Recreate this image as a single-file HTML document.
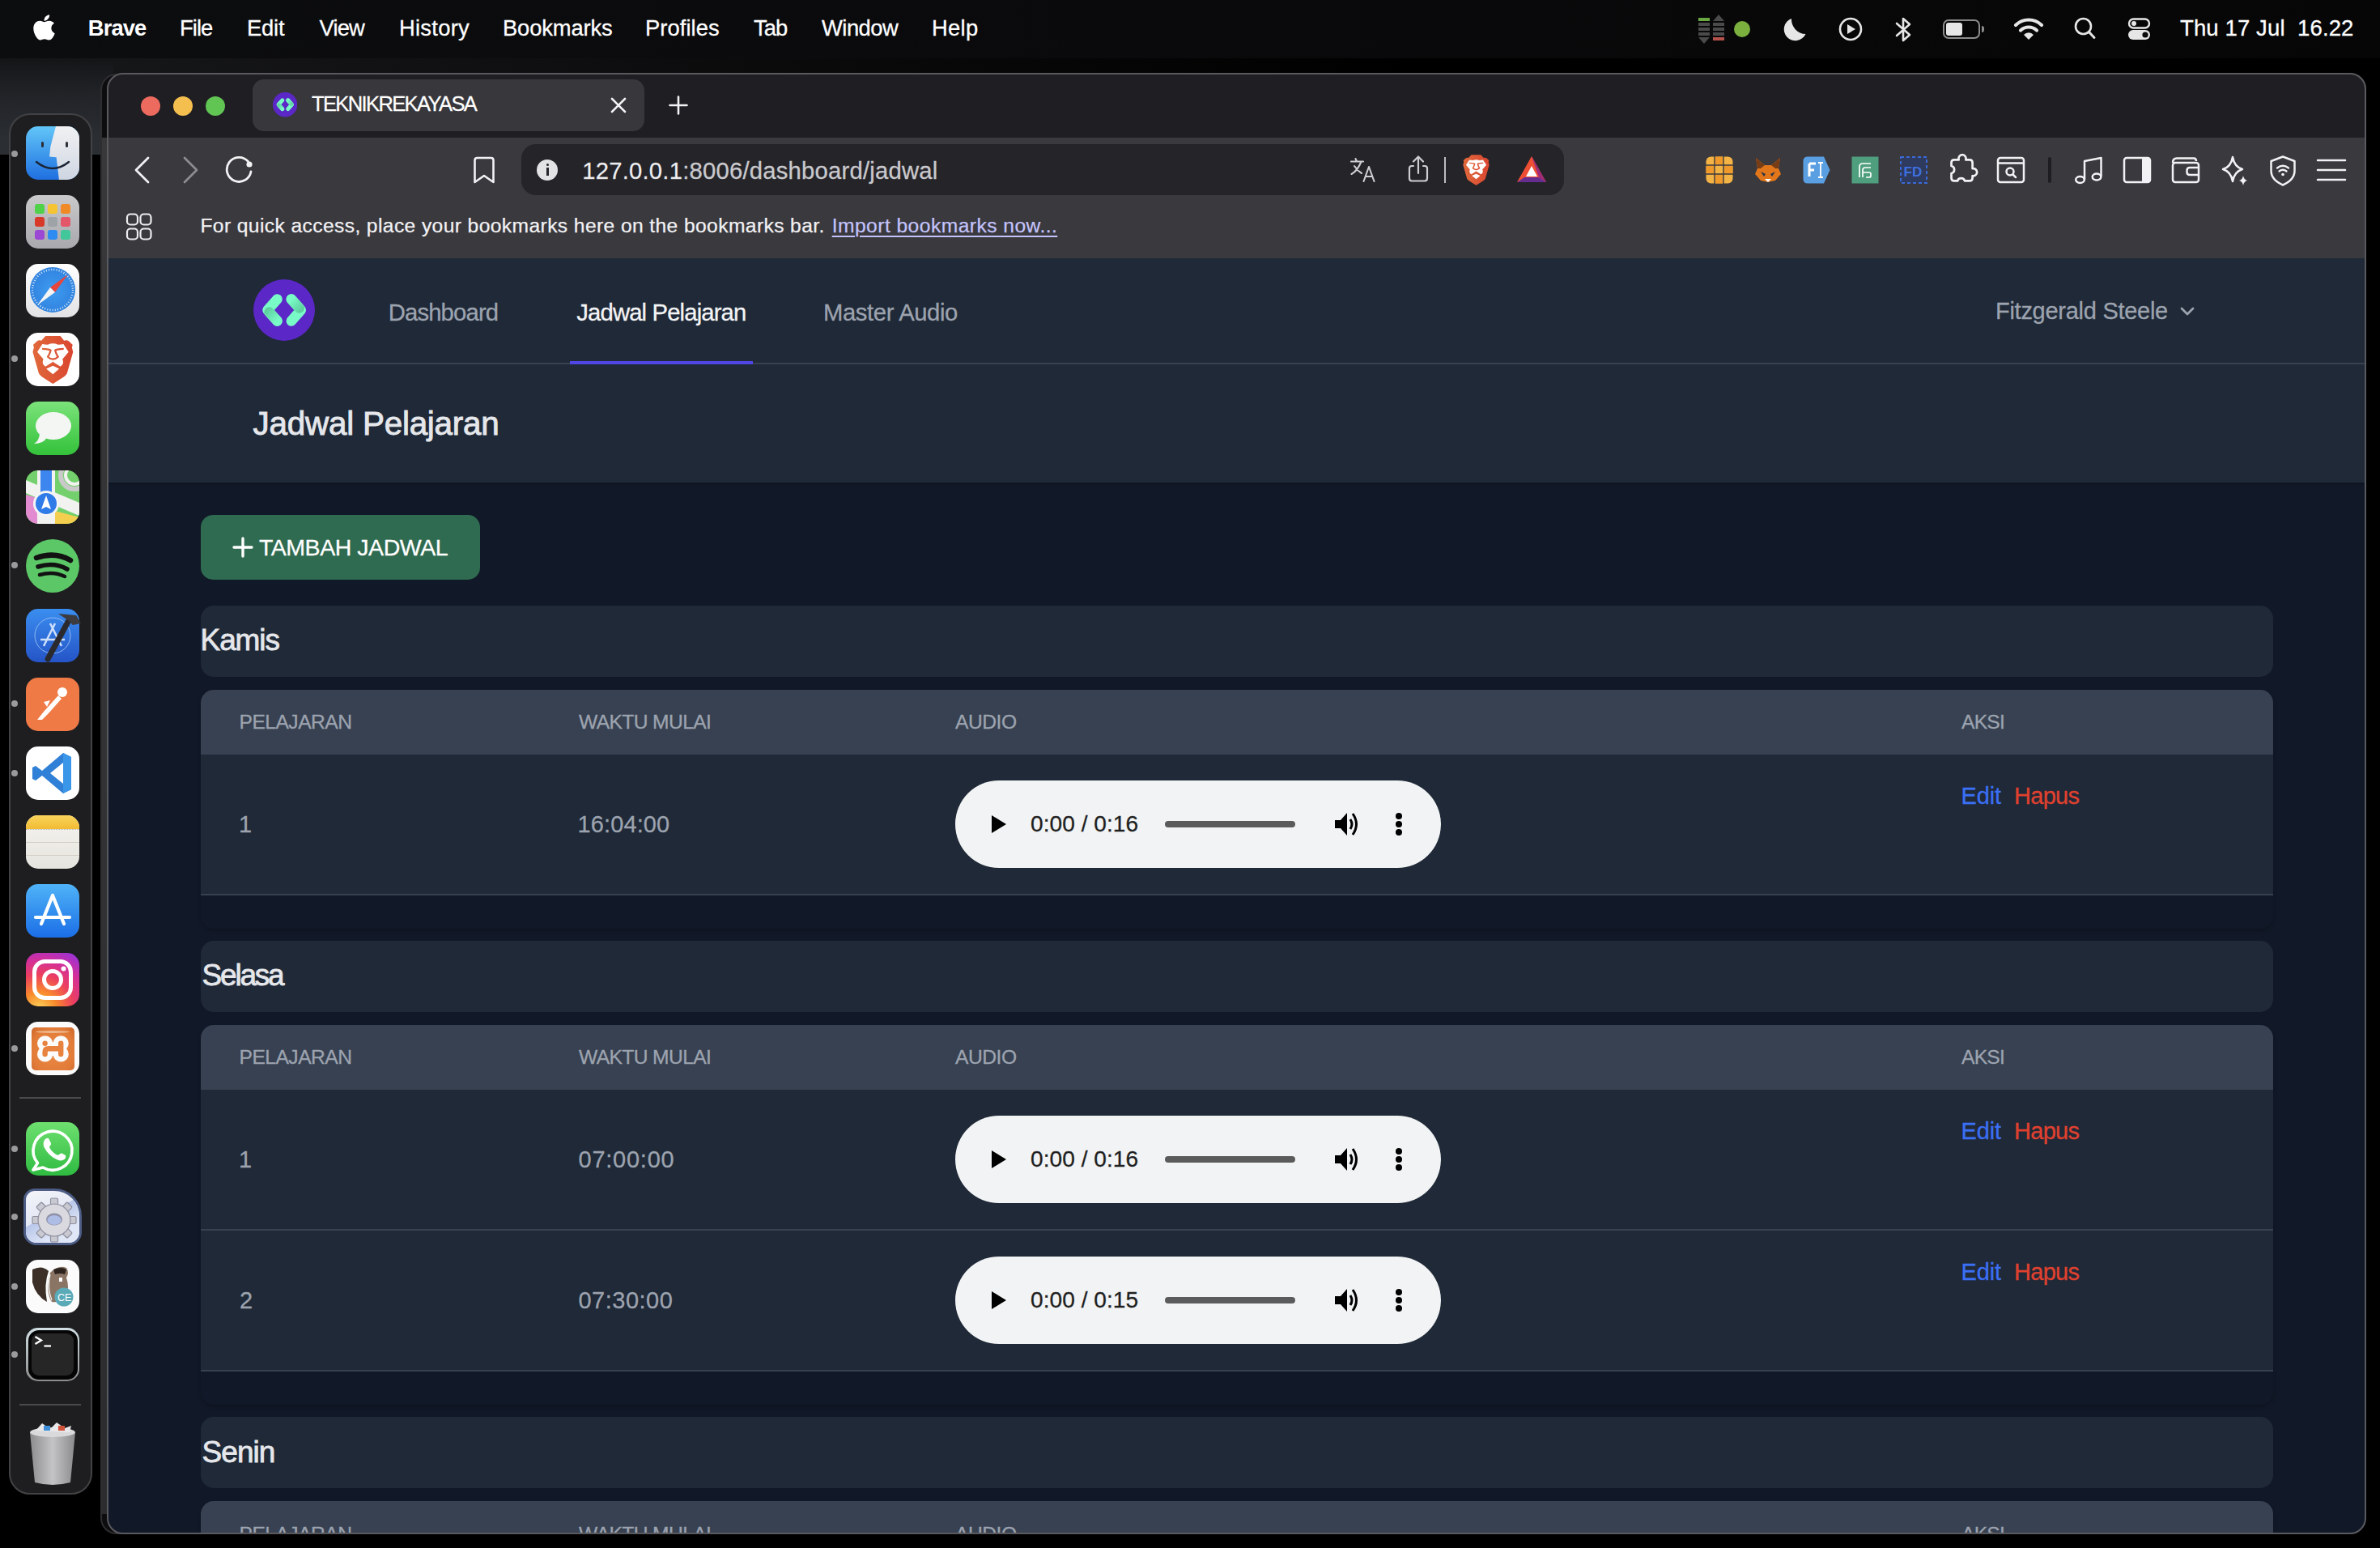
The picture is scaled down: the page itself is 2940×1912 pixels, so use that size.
<!DOCTYPE html>
<html><head><meta charset="utf-8">
<style>
*{box-sizing:border-box;margin:0;padding:0}
html,body{width:2940px;height:1912px;overflow:hidden;background:#000;font-family:"Liberation Sans",sans-serif}
.a{position:absolute}
.t{position:absolute;white-space:nowrap;line-height:1}
#win{position:absolute;left:0;top:0;width:2940px;height:1912px;clip-path:inset(90px 17px 17px 132px round 20px)}
</style></head>
<body>
<div class="a" style="left:0;top:72px;width:140px;height:119px;background:linear-gradient(180deg,#141517 0px,#202226 40px,#2b2e33 100px,#2b2e33 118px)"></div>
<div class="a" style="left:140px;top:72px;width:2800px;height:20px;background:linear-gradient(90deg,#151618 0px,#0b0b0c 800px,#000 1600px)"></div>
<div class="a" style="left:0;top:0;width:2940px;height:72px;background:linear-gradient(90deg,#0c0d0f 0px,#0a0a0c 1400px,#060606 2940px)"></div>
<svg class="a" style="left:41px;top:18px" width="27" height="33" viewBox="0 0 384 470"><path fill="#fff" d="M318.7 268.7c-.2-36.7 16.4-64.4 50-84.8-18.8-26.9-47.2-41.7-84.7-44.6-35.5-2.8-74.3 20.7-88.5 20.7-15 0-49.4-19.7-76.4-19.7C63.3 141.2 4 184.8 4 273.5q0 39.3 14.4 81.2c12.8 36.7 59 126.7 107.2 125.2 25.2-.6 43-17.9 75.8-17.9 31.8 0 48.3 17.9 76.4 17.9 48.6-.7 90.4-82.5 102.6-119.3-65.2-30.7-61.7-90-61.7-91.9zm-56.6-164.2c27.3-32.4 24.8-61.9 24-72.5-24.1 1.4-52 16.4-67.9 34.9-17.5 19.8-27.8 44.3-25.6 71.9 26.1 2 49.9-11.4 69.5-34.3z" transform="translate(0,-30)"/></svg>
<svg class="a" style="left:2096px;top:17px" width="36" height="38" viewBox="0 0 36 38">
 <rect x="2" y="5" width="14" height="4" fill="#6aa842"/>
 <rect x="2" y="11" width="14" height="4" fill="#4a4a4a"/><rect x="2" y="17" width="14" height="4" fill="#4a4a4a"/><rect x="2" y="23" width="14" height="4" fill="#4a4a4a"/>
 <polygon points="2,29 16,29 9,37" fill="#4a4a4a"/>
 <polygon points="20,9 34,9 27,1" fill="#4a4a4a"/>
 <rect x="20" y="11" width="14" height="4" fill="#4a4a4a"/><rect x="20" y="17" width="14" height="4" fill="#4a4a4a"/><rect x="20" y="23" width="14" height="4" fill="#4a4a4a"/>
 <rect x="20" y="29" width="14" height="4" fill="#b5514b"/>
</svg>
<div class="a" style="left:2142px;top:26px;width:20px;height:20px;border-radius:50%;background:#7bb03f"></div>
<svg class="a" style="left:2200px;top:20px" width="34" height="34" viewBox="0 0 34 34"><path d="M13 3 A14 14 0 1 0 30.5 22 A18 18 0 0 1 13 3 Z" fill="#e6e6e6"/></svg>
<svg class="a" style="left:2270px;top:20px" width="32" height="32" viewBox="0 0 32 32"><circle cx="16" cy="16" r="13" fill="none" stroke="#e6e6e6" stroke-width="2.6"/><polygon points="12,10 22,16 12,22" fill="#e6e6e6"/></svg>
<svg class="a" style="left:2340px;top:20px" width="24" height="34" viewBox="0 0 24 34"><polyline points="3,9 19,23 11,30 11,3 19,10 3,24" fill="none" stroke="#e6e6e6" stroke-width="2.6" stroke-linecap="round" stroke-linejoin="round"/></svg>
<div class="a" style="left:2400px;top:24px;width:46px;height:24px;border-radius:7px;border:2.5px solid #8c8c8c"></div>
<div class="a" style="left:2404px;top:28px;width:20px;height:16px;border-radius:3px;background:#e6e6e6"></div>
<div class="a" style="left:2448px;top:32px;width:3px;height:8px;border-radius:0 3px 3px 0;background:#8c8c8c"></div>
<svg class="a" style="left:2487px;top:21px" width="38" height="29" viewBox="0 0 38 29">
 <path d="M3 10 A23 23 0 0 1 35 10" fill="none" stroke="#e6e6e6" stroke-width="4.2" stroke-linecap="round"/>
 <path d="M9 16.5 A14.5 14.5 0 0 1 29 16.5" fill="none" stroke="#e6e6e6" stroke-width="4.2" stroke-linecap="round"/>
 <path d="M13 22 L19 28 L25 22 A8 8 0 0 0 13 22 Z" fill="#e6e6e6"/>
</svg>
<svg class="a" style="left:2560px;top:20px" width="32" height="32" viewBox="0 0 32 32"><circle cx="13.5" cy="12.5" r="9.5" fill="none" stroke="#e6e6e6" stroke-width="2.6"/><line x1="20.5" y1="19.5" x2="27" y2="26.5" stroke="#e6e6e6" stroke-width="3" stroke-linecap="round"/></svg>
<svg class="a" style="left:2627px;top:21px" width="32" height="30" viewBox="0 0 32 30">
 <rect x="3" y="2.5" width="25" height="11" rx="5.5" fill="none" stroke="#e6e6e6" stroke-width="2.4"/><circle cx="9" cy="8" r="3" fill="#e6e6e6"/>
 <rect x="2" y="16" width="27" height="12" rx="6" fill="#e6e6e6"/><circle cx="23" cy="22" r="3.6" fill="#0b0b0d"/>
</svg>

<div class="t" style="left:108.80px;top:20.81px;font-size:27.39px;font-weight:700;color:#fff;letter-spacing:-0.918px;">Brave</div>
<div class="t" style="left:222.00px;top:20.81px;font-size:27.39px;font-weight:400;color:#fff;letter-spacing:-0.962px;-webkit-text-stroke:0.27px #fff;">File</div>
<div class="t" style="left:305.00px;top:20.81px;font-size:27.39px;font-weight:400;color:#fff;letter-spacing:-0.188px;-webkit-text-stroke:0.27px #fff;">Edit</div>
<div class="t" style="left:394.50px;top:20.81px;font-size:27.39px;font-weight:400;color:#fff;letter-spacing:-0.857px;-webkit-text-stroke:0.27px #fff;">View</div>
<div class="t" style="left:493.00px;top:20.81px;font-size:27.39px;font-weight:400;color:#fff;letter-spacing:0.252px;-webkit-text-stroke:0.27px #fff;">History</div>
<div class="t" style="left:621.00px;top:20.81px;font-size:27.39px;font-weight:400;color:#fff;letter-spacing:-0.153px;-webkit-text-stroke:0.27px #fff;">Bookmarks</div>
<div class="t" style="left:797.00px;top:20.81px;font-size:27.39px;font-weight:400;color:#fff;letter-spacing:0.058px;-webkit-text-stroke:0.27px #fff;">Profiles</div>
<div class="t" style="left:931.00px;top:20.81px;font-size:27.39px;font-weight:400;color:#fff;letter-spacing:-0.955px;-webkit-text-stroke:0.27px #fff;">Tab</div>
<div class="t" style="left:1015.00px;top:20.81px;font-size:27.39px;font-weight:400;color:#fff;letter-spacing:-0.519px;-webkit-text-stroke:0.27px #fff;">Window</div>
<div class="t" style="left:1151.00px;top:20.81px;font-size:27.39px;font-weight:400;color:#fff;letter-spacing:0.308px;-webkit-text-stroke:0.27px #fff;">Help</div>
<div class="t" style="left:2693.00px;top:20.89px;font-size:27.54px;font-weight:400;color:#fff;letter-spacing:0.105px;-webkit-text-stroke:0.28px #fff;">Thu 17 Jul&nbsp;&nbsp;16.22</div>
<div class="a" style="left:11px;top:140px;width:103px;height:1706px;border-radius:26px;background:#1e1e20;border:2px solid #424245"></div>
<div class="a" style="left:32px;top:156px;width:66px;height:66px"><div style="position:absolute;left:0;top:0;width:66px;height:66px;border-radius:15px;overflow:hidden;background:linear-gradient(180deg,#62c6f8,#1f6fe0)"><div style="position:absolute;left:0;top:0;width:66px;height:66px;background:linear-gradient(180deg,#f1f1f3,#cfd6e2);clip-path:polygon(56% 0,100% 0,100% 100%,62% 100%,57% 58%,44% 57%,46% 38%)"></div><svg style="position:absolute;left:0;top:0" width="66" height="66"><rect x="19" y="19" width="3" height="7" rx="1.5" fill="#2a2f38"/><rect x="49" y="19" width="3" height="7" rx="1.5" fill="#2a2f38"/><path d="M13 44 Q33 60 53 44" fill="none" stroke="#1b2434" stroke-width="2.4" stroke-linecap="round"/></svg></div></div>
<div class="a" style="left:32px;top:241px;width:66px;height:66px"><div style="position:absolute;left:0;top:0;width:66px;height:66px;border-radius:15px;background:linear-gradient(180deg,#c9c9cc,#a9a9ad)"><svg style="position:absolute;left:0;top:0" width="66" height="66"><rect x="11" y="11" width="12" height="12" rx="3" fill="#4fd14a"/><rect x="27" y="11" width="12" height="12" rx="3" fill="#f6c433"/><rect x="43" y="11" width="12" height="12" rx="3" fill="#f08a26"/><rect x="11" y="27" width="12" height="12" rx="3" fill="#d83a2a"/><rect x="27" y="27" width="12" height="12" rx="3" fill="#9ea3a8"/><rect x="43" y="27" width="12" height="12" rx="3" fill="#e4566a"/><rect x="11" y="43" width="12" height="12" rx="3" fill="#9b48d4"/><rect x="27" y="43" width="12" height="12" rx="3" fill="#2e8bf2"/><rect x="43" y="43" width="12" height="12" rx="3" fill="#41c79a"/></svg></div></div>
<div class="a" style="left:32px;top:326px;width:66px;height:66px"><div style="position:absolute;left:0;top:0;width:66px;height:66px;border-radius:15px;background:linear-gradient(180deg,#fff,#e2e2e4)"><div style="position:absolute;left:5px;top:4px;width:56px;height:56px;border-radius:50%;background:radial-gradient(circle,#3f9cf0,#2a78d8)"></div><svg style="position:absolute;left:0;top:0" width="66" height="66"><circle cx="33" cy="32" r="25" fill="none" stroke="#d6e8fb" stroke-width="2.5" stroke-dasharray="1 2.2"/><polygon points="52,13 36,35 30,29" fill="#e8453c"/><polygon points="14,51 30,29 36,35" fill="#f4f4f4"/></svg></div></div>
<div class="a" style="left:32px;top:411px;width:66px;height:66px"><div style="position:absolute;left:0;top:0;width:66px;height:66px;border-radius:15px;background:#fff"><svg style="position:absolute;left:0;top:0" width="66" height="66" viewBox="85 100 1355 1365"><defs><linearGradient id="LGd" x1="0" x2="1"><stop offset="0" stop-color="#e0693b"/><stop offset="1" stop-color="#da4630"/></linearGradient></defs><path d="M580 185 L960 185 L1055 300 Q1130 280 1185 320 L1275 410 L1255 470 L1285 590 L1130 1140 Q1100 1190 1040 1230 L790 1395 Q770 1405 750 1395 L500 1230 Q440 1190 410 1140 L255 590 L285 470 L265 410 L355 320 Q410 280 475 300 Z" fill="url(#LGd)"/><path d="M500 390 Q560 400 640 405 Q720 370 770 375 Q820 370 900 405 Q980 400 1040 390 L1170 590 L1015 770 Q1040 830 1030 880 Q1000 950 960 965 L780 850 L770 830 L760 850 L580 965 Q540 950 510 880 Q500 830 525 770 L370 590 Z" fill="#fff"/><path d="M495 512 Q640 515 712 548 Q690 640 640 715 Q700 775 770 775 Q840 775 900 715 Q850 640 828 548 Q900 515 1045 512" fill="none" stroke="url(#LGd)" stroke-width="48" stroke-linejoin="round"/><path d="M770 770 L770 855" stroke="url(#LGd)" stroke-width="40"/><path d="M600 1020 L770 945 L930 1020 L770 1160 Z" fill="#fff"/></svg></div></div>
<div class="a" style="left:32px;top:496px;width:66px;height:66px"><div style="position:absolute;left:0;top:0;width:66px;height:66px;border-radius:15px;background:linear-gradient(180deg,#7be37a,#33c23a)"><svg style="position:absolute;left:0;top:0" width="66" height="66"><ellipse cx="34" cy="30" rx="22" ry="17" fill="#f3f6f3"/><path d="M17 40 Q16 49 10 52 Q22 52 26 44 Z" fill="#f3f6f3"/></svg></div></div>
<div class="a" style="left:32px;top:581px;width:66px;height:66px"><div style="position:absolute;left:0;top:0;width:66px;height:66px;border-radius:15px;overflow:hidden;background:#74d06c"><svg style="position:absolute;left:0;top:0" width="66" height="66"><polygon points="0,30 14,34 14,66 0,66" fill="#e28bd0"/><polygon points="36,50 66,58 66,66 36,66" fill="#f4cf4f"/><polygon points="0,12 66,40 66,56 0,28" fill="#f2f2f0"/><rect x="14" y="0" width="22" height="66" fill="#f2f2f0"/><rect x="18" y="0" width="14" height="36" fill="#3d86f0"/><circle cx="60" cy="6" r="17" fill="none" stroke="#c9c9c9" stroke-width="6"/><circle cx="60" cy="6" r="11" fill="none" stroke="#f2f2f0" stroke-width="4"/><circle cx="25" cy="41" r="16" fill="#f4f4f4"/><circle cx="25" cy="41" r="13" fill="#2f7be8"/><polygon points="25,31 31,48 25,45 19,48" fill="#fff"/></svg></div></div>
<div class="a" style="left:32px;top:666px;width:66px;height:66px"><div style="position:absolute;left:0;top:0;width:66px;height:66px;border-radius:50%;background:#5cc767"><svg style="position:absolute;left:0;top:0" width="66" height="66"><path d="M13 23 Q36 15 55 26" fill="none" stroke="#121212" stroke-width="6.5" stroke-linecap="round"/><path d="M15 34 Q35 28 51 37" fill="none" stroke="#121212" stroke-width="5.5" stroke-linecap="round"/><path d="M17 44 Q34 39 48 46" fill="none" stroke="#121212" stroke-width="4.5" stroke-linecap="round"/></svg></div></div>
<div class="a" style="left:32px;top:752px;width:66px;height:66px"><div style="position:absolute;left:0;top:0;width:66px;height:66px;border-radius:15px;background:linear-gradient(180deg,#3a8ef0,#2554c7)"><svg style="position:absolute;left:0;top:-4px" width="72" height="74"><circle cx="33" cy="37" r="22" fill="none" stroke="#8fbaf5" stroke-width="1"/><path d="M22 50 L36 22 M44 50 L30 22 M18 42 L48 42" stroke="#cfe0fb" stroke-width="2.5" fill="none"/><path d="M27 66 L52 20" stroke="#2a2a2e" stroke-width="7" stroke-linecap="round"/><path d="M40 10 L62 12 L68 22 L58 24 L52 18 Z" fill="#3b3b40"/></svg></div></div>
<div class="a" style="left:32px;top:837px;width:66px;height:66px"><div style="position:absolute;left:0;top:0;width:66px;height:66px;border-radius:15px;background:#ef7a45"><svg style="position:absolute;left:0;top:0" width="66" height="66"><circle cx="45" cy="18" r="6" fill="#fff"/><path d="M40 22 L22 42 L14 52 L20 52 L28 44 L44 26 Z" fill="#fff"/><path d="M22 30 L30 28 L26 36 Z" fill="#fff"/></svg></div></div>
<div class="a" style="left:32px;top:922px;width:66px;height:66px"><div style="position:absolute;left:0;top:0;width:66px;height:66px;border-radius:15px;background:#fff"><svg style="position:absolute;left:0;top:0" width="66" height="66"><path d="M46 8 L56 13 L56 53 L46 58 L20 36 L12 42 L8 40 L8 26 L12 24 L20 30 Z M46 20 L30 33 L46 46 Z" fill="#2f80d6"/><path d="M46 8 L56 13 L56 53 L46 58 Z" fill="#3a96e8"/></svg></div></div>
<div class="a" style="left:32px;top:1007px;width:66px;height:66px"><div style="position:absolute;left:0;top:0;width:66px;height:66px;border-radius:15px;overflow:hidden;background:linear-gradient(180deg,#f4f3ef,#e6e4de)"><div style="position:absolute;left:0;top:0;width:66px;height:17px;background:linear-gradient(180deg,#f9d45c,#f2bb33)"></div><div style="position:absolute;left:0;top:17px;width:66px;height:1px;border-top:1px dotted #b9b5ac"></div><div style="position:absolute;left:0;top:33px;width:66px;height:1px;background:#d3cfc6"></div><div style="position:absolute;left:0;top:49px;width:66px;height:1px;background:#d3cfc6"></div></div></div>
<div class="a" style="left:32px;top:1092px;width:66px;height:66px"><div style="position:absolute;left:0;top:0;width:66px;height:66px;border-radius:15px;background:linear-gradient(180deg,#4fb3f8,#1b6ee6)"><svg style="position:absolute;left:0;top:0" width="66" height="66"><path d="M33 14 L19 49 M33 14 L47 49 M12 41 L54 41" stroke="#fff" stroke-width="4.2" stroke-linecap="round" fill="none"/></svg></div></div>
<div class="a" style="left:32px;top:1177px;width:66px;height:66px"><div style="position:absolute;left:0;top:0;width:66px;height:66px;border-radius:15px;background:radial-gradient(circle at 25% 105%,#fcd55a 0%,#f98a2c 25%,#ec3f5f 50%,#d22f9c 72%,#8a34e8 100%)"><svg style="position:absolute;left:0;top:0" width="66" height="66"><rect x="10.5" y="10.5" width="45" height="45" rx="13" fill="none" stroke="#fff" stroke-width="5"/><circle cx="33" cy="33" r="10.5" fill="none" stroke="#fff" stroke-width="5"/><circle cx="46.5" cy="19.5" r="3" fill="#fff"/></svg></div></div>
<div class="a" style="left:32px;top:1262px;width:66px;height:66px"><div style="position:absolute;left:0;top:0;width:66px;height:66px;border-radius:15px;background:#fbfbfb"><div style="position:absolute;left:6.5px;top:6.5px;width:53px;height:53px;border-radius:5px;background:radial-gradient(ellipse at 50% 55%,#eb8a45 0%,#e27b38 70%,#c9662a 100%)"></div><div style="position:absolute;left:12px;top:10.5px;width:42px;height:3px;border-radius:50%;background:#edb88f"></div><svg style="position:absolute;left:0;top:0" width="66" height="66"><g fill="#fbfbfb"><circle cx="23.6" cy="26.8" r="9.6"/><circle cx="43.2" cy="26.8" r="9.6"/><circle cx="23.6" cy="40" r="9.6"/><circle cx="43.2" cy="40" r="9.6"/><rect x="22" y="25" width="23" height="17"/></g><circle cx="23.6" cy="26.8" r="3.2" fill="#e8823f"/><path d="M43.2 26.8 V40 M43.2 33.3 H28 Q23.6 33.3 23.6 37.5 V40" fill="none" stroke="#e8823f" stroke-width="6.4" stroke-linecap="round"/></svg></div></div>
<div class="a" style="left:24px;top:1355px;width:76px;height:2px;background:#4a4a4d"></div>
<div class="a" style="left:32px;top:1386px;width:66px;height:66px"><div style="position:absolute;left:0;top:0;width:66px;height:66px;border-radius:15px;background:linear-gradient(180deg,#6ee06f,#2fbb41)"><svg style="position:absolute;left:0;top:0" width="66" height="66"><path d="M14.5 50.5 A24 24 0 1 1 21 56 L9 59 Z" fill="none" stroke="#fff" stroke-width="3.6" stroke-linejoin="round"/><path d="M23 22 Q25 19 28 20 L31 26 Q31.5 28 29.5 29.5 Q28.5 30.5 29.5 32 Q33 38 38.5 40.5 Q40 41 41 40 Q42.5 38 44.5 38.5 L49 41 Q50 44 47.5 46 Q44 48.5 39 46.5 Q28 42 22.5 31 Q20.5 26 23 22 Z" fill="#fff"/></svg></div></div>
<div class="a" style="left:32px;top:1470px;width:66px;height:66px"><div style="position:absolute;left:-3px;top:-2px;width:72px;height:70px;border-radius:14px 34px 16px 16px;background:linear-gradient(160deg,#f4f5fa 0%,#dfe4f2 60%,#c9d2ea 100%);border:3px solid #4d5d85;overflow:hidden"><div style="position:absolute;left:0;top:0;width:70px;height:70px;background:linear-gradient(150deg,rgba(0,0,0,0) 40%,#b8c6ea 41%,#dfe6f6 70%)"></div><svg style="position:absolute;left:0;top:0" width="70" height="70" viewBox="0 0 70 70"><g transform="translate(35,36)"><g fill="#c9c9d1" stroke="#8f8fa0" stroke-width="1.2"><rect x="-4.5" y="-27" width="9" height="10" rx="1.5" transform="rotate(0)"/><rect x="-4.5" y="-27" width="9" height="10" rx="1.5" transform="rotate(45)"/><rect x="-4.5" y="-27" width="9" height="10" rx="1.5" transform="rotate(90)"/><rect x="-4.5" y="-27" width="9" height="10" rx="1.5" transform="rotate(135)"/><rect x="-4.5" y="-27" width="9" height="10" rx="1.5" transform="rotate(180)"/><rect x="-4.5" y="-27" width="9" height="10" rx="1.5" transform="rotate(225)"/><rect x="-4.5" y="-27" width="9" height="10" rx="1.5" transform="rotate(270)"/><rect x="-4.5" y="-27" width="9" height="10" rx="1.5" transform="rotate(315)"/><circle r="20"/></g><circle r="19" fill="#d9d9df"/><ellipse rx="10" ry="7.5" cx="0" cy="-1" fill="#8f90a8"/><ellipse rx="8.5" ry="6" cx="0" cy="0" fill="#aebde6"/></g></svg></div></div>
<div class="a" style="left:32px;top:1556px;width:66px;height:66px"><div style="position:absolute;left:0;top:0;width:66px;height:66px;border-radius:15px;background:#fbfbfb"><svg style="position:absolute;left:0;top:0" width="66" height="66"><path d="M8 12 Q20 6 28 14 Q22 30 26 52 Q12 44 8 28 Z" fill="#3b2f28"/><path d="M30 16 Q40 6 50 10 Q54 16 50 22 Q54 34 50 44 Q44 54 32 52 Q24 40 30 16 Z" fill="#8a7565"/><path d="M34 12 Q44 8 50 12 L48 18 Q42 16 36 18 Z" fill="#2d241f"/><rect x="41" y="22" width="4" height="5" fill="#fff"/><path d="M30 18 Q26 34 32 50" fill="none" stroke="#f4f4f4" stroke-width="1.2"/><circle cx="47" cy="46" r="11.5" fill="#5aaab8"/><text x="39" y="51" font-family="Liberation Sans" font-size="12.5" fill="#fff">CE</text></svg></div></div>
<div class="a" style="left:32px;top:1640px;width:66px;height:66px"><div style="position:absolute;left:0;top:0;width:66px;height:66px;border-radius:15px;background:linear-gradient(180deg,#d2e0e6,#8c8c8c);"><div style="position:absolute;left:2.5px;top:2.5px;width:61px;height:61px;border-radius:13px;background:#050505"></div><div style="position:absolute;left:7px;top:7px;width:52px;height:52px;border-radius:9px;background:#262626"></div><svg style="position:absolute;left:0;top:0" width="66" height="66"><path d="M11.5 11 L19 15.5 L11.5 20" fill="none" stroke="#fff" stroke-width="2.3"/><path d="M22.5 22.5 H31" stroke="#fff" stroke-width="2.3"/></svg></div></div>
<div class="a" style="left:24px;top:1734px;width:76px;height:2px;background:#4a4a4d"></div>
<svg class="a" style="left:34px;top:1755px" width="62" height="82" viewBox="0 0 62 82"><defs><linearGradient id="tg" x1="0" x2="1"><stop offset="0" stop-color="#8c8c8e"/><stop offset=".5" stop-color="#c4c4c6"/><stop offset="1" stop-color="#8a8a8c"/></linearGradient></defs><path d="M3 14 L59 14 L53 76 Q31 82 9 76 Z" fill="url(#tg)"/><ellipse cx="31" cy="14" rx="28" ry="6" fill="#d9d9db"/><path d="M10 12 L18 3 L28 10 L36 2 L46 9 L54 6 L52 14 Z" fill="#e8e8ea"/><rect x="20" y="6" width="8" height="6" fill="#3c8fd8"/><rect x="38" y="6" width="8" height="6" fill="#d0523a"/></svg>
<div class="a" style="left:14px;top:186px;width:8px;height:8px;border-radius:50%;background:#9a9a9c"></div>
<div class="a" style="left:14px;top:439px;width:8px;height:8px;border-radius:50%;background:#9a9a9c"></div>
<div class="a" style="left:14px;top:694px;width:8px;height:8px;border-radius:50%;background:#9a9a9c"></div>
<div class="a" style="left:14px;top:865px;width:8px;height:8px;border-radius:50%;background:#9a9a9c"></div>
<div class="a" style="left:14px;top:951px;width:8px;height:8px;border-radius:50%;background:#9a9a9c"></div>
<div class="a" style="left:14px;top:1291px;width:8px;height:8px;border-radius:50%;background:#9a9a9c"></div>
<div class="a" style="left:14px;top:1415px;width:8px;height:8px;border-radius:50%;background:#9a9a9c"></div>
<div class="a" style="left:14px;top:1499px;width:8px;height:8px;border-radius:50%;background:#9a9a9c"></div>
<div class="a" style="left:14px;top:1585px;width:8px;height:8px;border-radius:50%;background:#9a9a9c"></div>
<div class="a" style="left:14px;top:1669px;width:8px;height:8px;border-radius:50%;background:#9a9a9c"></div>
<div class="a" style="left:124px;top:91px;width:60px;height:1804px;border-radius:20px 0 0 20px;background:#0d0d0f;border:2px solid #2e2e31;border-right:none"></div>
<div class="a" style="left:126px;top:170px;width:6px;height:1700px;background:linear-gradient(180deg,#38383b,#2c2c2e)"></div>
<div id="win">

<div class="a" style="left:132px;top:90px;width:2791px;height:80px;background:#1f1e23"></div>
<div class="a" style="left:132px;top:170px;width:2791px;height:149px;background:#3a393e"></div>
<div class="a" style="left:174px;top:119px;width:24px;height:24px;border-radius:50%;background:#ec6a5e"></div>
<div class="a" style="left:214px;top:119px;width:24px;height:24px;border-radius:50%;background:#f4bf4f"></div>
<div class="a" style="left:254px;top:119px;width:24px;height:24px;border-radius:50%;background:#61c554"></div>
<div class="a" style="left:312px;top:98px;width:484px;height:64px;border-radius:14px;background:#38373c"></div>
<svg class="a" style="left:336.5px;top:114.39999999999999px" width="30.4" height="30.4" viewBox="0 0 76 76"><circle cx="38" cy="38" r="38" fill="#5b27c7"/><defs><linearGradient id="lgA351" gradientUnits="userSpaceOnUse" x1="17" y1="38" x2="30" y2="51"><stop offset="0" stop-color="#5fcfa0"/><stop offset="1" stop-color="#79fbc8"/></linearGradient><linearGradient id="lgB351" gradientUnits="userSpaceOnUse" x1="59.5" y1="38" x2="46.5" y2="25"><stop offset="0" stop-color="#5fcfa0"/><stop offset="1" stop-color="#79fbc8"/></linearGradient></defs><g fill="none" stroke-width="12.5" stroke-linecap="round" stroke-linejoin="round"><polyline points="29.5,24.5 17.5,38 29.5,51.5" stroke="#79fbc8"/><polyline points="46.8,51.5 58.8,38 46.8,24.5" stroke="#79fbc8"/><line x1="19.5" y1="40.5" x2="29.5" y2="51.5" stroke="url(#lgA351)"/><line x1="56.8" y1="35.5" x2="46.8" y2="24.5" stroke="url(#lgB351)"/></g></svg>
<svg class="a" style="left:754px;top:120px" width="20" height="20" viewBox="0 0 20 20"><path d="M2 2 L18 18 M18 2 L2 18" stroke="#f2f2f4" stroke-width="2.6" stroke-linecap="round"/></svg>
<svg class="a" style="left:826px;top:118px" width="24" height="24" viewBox="0 0 24 24"><path d="M12 1.5 V22.5 M1.5 12 H22.5" stroke="#f2f2f4" stroke-width="2.6" stroke-linecap="round"/></svg>
<svg class="a" style="left:160px;top:190px" width="32" height="40" viewBox="0 0 32 40"><polyline points="23,5 8,20 23,35" fill="none" stroke="#f2f2f4" stroke-width="2.8" stroke-linecap="round" stroke-linejoin="round"/></svg>
<svg class="a" style="left:220px;top:190px" width="32" height="40" viewBox="0 0 32 40"><polyline points="8,5 23,20 8,35" fill="none" stroke="#8d8c91" stroke-width="2.8" stroke-linecap="round" stroke-linejoin="round"/></svg>
<svg class="a" style="left:275px;top:186.5px" width="42" height="40" viewBox="0 0 42 40"><path d="M31.5 12.5 A15 15 0 1 0 35 25" fill="none" stroke="#f2f2f4" stroke-width="2.8" stroke-linecap="round"/><circle cx="33" cy="16" r="3.6" fill="#f2f2f4"/></svg>
<svg class="a" style="left:580px;top:190px" width="36" height="40" viewBox="0 0 36 40"><path d="M6.5 8 Q6.5 5 9.5 5 H26.5 Q29.5 5 29.5 8 V35 L18 27 L6.5 35 Z" fill="none" stroke="#f2f2f4" stroke-width="2.6" stroke-linejoin="round"/></svg>
<div class="a" style="left:644px;top:178px;width:1288px;height:63px;border-radius:18px;background:#252429"></div>
<div class="a" style="left:663px;top:197px;width:26px;height:26px;border-radius:50%;background:#e3e3e6"></div>
<div class="a" style="left:674.5px;top:202px;width:3px;height:3px;border-radius:50%;background:#252429"></div>
<div class="a" style="left:674.5px;top:207px;width:3px;height:10px;background:#252429"></div>
<svg class="a" style="left:1665px;top:193px" width="38" height="34" viewBox="0 0 38 34"><path d="M4 6.5 H19 M9.5 3 L11 6.5 M16.5 6.5 Q12 18 4.5 22 M8 12 Q12 18 17 21" fill="none" stroke="#cfcfd3" stroke-width="2.1" stroke-linecap="round"/><path d="M19.5 31 L26 13 L32.5 31 M22 25 H30" fill="none" stroke="#cfcfd3" stroke-width="2.1" stroke-linecap="round" stroke-linejoin="round"/></svg>
<svg class="a" style="left:1736px;top:190px" width="32" height="38" viewBox="0 0 32 38"><path d="M10 15 H8 Q5 15 5 18 V30 Q5 33.5 8 33.5 H24 Q27 33.5 27 30 V18 Q27 15 24 15 H22" fill="none" stroke="#cfcfd3" stroke-width="2.2" stroke-linecap="round"/><path d="M16 24 V4 M10 9.5 L16 3.5 L22 9.5" fill="none" stroke="#cfcfd3" stroke-width="2.2" stroke-linecap="round" stroke-linejoin="round"/></svg>
<div class="a" style="left:1784px;top:194px;width:2px;height:32px;background:#bdbdc1"></div>
<svg class="a" style="left:1807px;top:191px" width="33" height="38" viewBox="245 175 1050 1235" preserveAspectRatio="none"><defs><linearGradient id="LGu" x1="0" x2="1"><stop offset="0" stop-color="#e0693b"/><stop offset="1" stop-color="#da4630"/></linearGradient></defs><path d="M580 185 L960 185 L1055 300 Q1130 280 1185 320 L1275 410 L1255 470 L1285 590 L1130 1140 Q1100 1190 1040 1230 L790 1395 Q770 1405 750 1395 L500 1230 Q440 1190 410 1140 L255 590 L285 470 L265 410 L355 320 Q410 280 475 300 Z" fill="url(#LGu)"/><path d="M500 390 Q560 400 640 405 Q720 370 770 375 Q820 370 900 405 Q980 400 1040 390 L1170 590 L1015 770 Q1040 830 1030 880 Q1000 950 960 965 L780 850 L770 830 L760 850 L580 965 Q540 950 510 880 Q500 830 525 770 L370 590 Z" fill="#fff"/><path d="M495 512 Q640 515 712 548 Q690 640 640 715 Q700 775 770 775 Q840 775 900 715 Q850 640 828 548 Q900 515 1045 512" fill="none" stroke="url(#LGu)" stroke-width="48" stroke-linejoin="round"/><path d="M770 770 L770 855" stroke="url(#LGu)" stroke-width="40"/><path d="M600 1020 L770 945 L930 1020 L770 1160 Z" fill="#fff"/></svg>
<svg class="a" style="left:1873px;top:192px" width="38" height="34" viewBox="0 0 38 34"><polygon points="19,1 37,33 1,33" fill="#ee4f34"/><polygon points="19,1 37,33 28,27" fill="#9e2a78"/><polygon points="1,33 37,33 28,27 10,27" fill="#662d91"/><polygon points="19,13 26,26 12,26" fill="#fff"/></svg>
<svg class="a" style="left:2107px;top:193px" width="34" height="34" viewBox="0 0 34 34"><rect x="0.5" y="0.5" width="33" height="33" rx="6" fill="#f4b445"/><g fill="#ef9a2a"><rect x="11.5" y="0.5" width="10" height="10"/><rect x="0.5" y="11.5" width="10" height="10"/><rect x="22.5" y="11.5" width="11" height="10"/><rect x="11.5" y="22.5" width="10" height="11"/></g><g stroke="#3a393e" stroke-width="1.4"><line x1="11" y1="0" x2="11" y2="34"/><line x1="22" y1="0" x2="22" y2="34"/><line x1="0" y1="11" x2="34" y2="11"/><line x1="0" y1="22" x2="34" y2="22"/></g></svg>
<svg class="a" style="left:2167px;top:194px" width="34" height="32" viewBox="0 0 34 32"><polygon points="2,1 13,10 21,10 32,1 30,14 33,21 26,29 17,31 8,29 1,21 4,14" fill="#e2761b"/><polygon points="2,1 13,10 8,14 4,14" fill="#763d16"/><polygon points="32,1 21,10 26,14 30,14" fill="#763d16"/><polygon points="8,18 14,21 12,24" fill="#233447"/><polygon points="26,18 20,21 22,24" fill="#233447"/><polygon points="13,27 21,27 17,31" fill="#fff"/></svg>
<svg class="a" style="left:2227px;top:193px" width="34" height="34" viewBox="0 0 34 34"><path d="M6 0.5 H26 L33.5 17 L26 33.5 H6 Q0.5 33.5 0.5 28 V6 Q0.5 0.5 6 0.5 Z" fill="#5a9fe2"/><path d="M8 9 H16 M8 9 V25 M8 17 H14" stroke="#fff" stroke-width="3"/><path d="M19 8 H25 M22 8 V26 M19 26 H25" stroke="#fff" stroke-width="1.8"/></svg>
<svg class="a" style="left:2287px;top:193px" width="34" height="34" viewBox="0 0 34 34"><rect x="0.5" y="0.5" width="33" height="33" fill="#4f9f7e"/><path d="M10 26 V13 Q10 9 14 9 H24 M14 26 V17 Q14 14 17 14 H24 M14 20 H22 Q24 20 24 22 V24 Q24 26 22 26 H18" fill="none" stroke="#fff" stroke-width="1.7"/></svg>
<svg class="a" style="left:2347px;top:193px" width="34" height="34" viewBox="0 0 34 34"><rect x="1" y="1" width="32" height="32" fill="#2e3a5e" stroke="#3a6ad8" stroke-width="2" stroke-dasharray="4 3"/><text x="4.5" y="24.5" font-family="Liberation Sans" font-size="17" font-weight="bold" fill="#3e70de">FD</text></svg>
<svg class="a" style="left:2400px;top:185px" width="50" height="50" viewBox="0 0 50 50"><path d="M10.5 16 Q10.5 12.4 14 12.4 H19.7 A4.6 4.6 0 1 1 28.3 12.4 H33 Q36.6 12.4 36.6 16 V23.2 A4.6 4.6 0 1 1 36.6 32.2 V34.7 Q36.6 38.3 33 38.3 H27 A4.6 4.6 0 0 0 18.2 38.3 H14 Q10.5 38.3 10.5 34.7 V29 A4.6 4.6 0 0 0 10.5 20 Z" fill="none" stroke="#f2f2f4" stroke-width="2.7" stroke-linejoin="round"/></svg>
<svg class="a" style="left:2466px;top:193px" width="36" height="34" viewBox="0 0 36 34"><rect x="2" y="2" width="32" height="30" rx="3" fill="none" stroke="#f2f2f4" stroke-width="2.5"/><line x1="2" y1="8.5" x2="34" y2="8.5" stroke="#f2f2f4" stroke-width="2.5"/><circle cx="17" cy="19" r="4.5" fill="none" stroke="#f2f2f4" stroke-width="2.5"/><line x1="20.5" y1="22.5" x2="24" y2="26" stroke="#f2f2f4" stroke-width="2.5" stroke-linecap="round"/></svg>
<div class="a" style="left:2530px;top:194px;width:4px;height:32px;border-radius:2px;background:#1e1e22"></div>
<svg class="a" style="left:2562px;top:193px" width="38" height="36" viewBox="0 0 38 36"><path d="M13 29 V6 L33.5 2 V25" fill="none" stroke="#f2f2f4" stroke-width="2.5" stroke-linejoin="round"/><ellipse cx="7.5" cy="29" rx="5.3" ry="4" fill="none" stroke="#f2f2f4" stroke-width="2.5"/><ellipse cx="28" cy="25.5" rx="5.3" ry="4" fill="none" stroke="#f2f2f4" stroke-width="2.5"/></svg>
<svg class="a" style="left:2622px;top:193px" width="36" height="34" viewBox="0 0 36 34"><rect x="2" y="2" width="32" height="30" rx="3" fill="none" stroke="#f2f2f4" stroke-width="2.5"/><rect x="24" y="2" width="10" height="30" rx="2" fill="#f2f2f4"/></svg>
<svg class="a" style="left:2682px;top:193px" width="36" height="34" viewBox="0 0 36 34"><path d="M2 8 Q2 2.5 7 2.5 H28 Q31 2.5 31 6" fill="none" stroke="#f2f2f4" stroke-width="2.5"/><rect x="2" y="8" width="32" height="24" rx="3" fill="none" stroke="#f2f2f4" stroke-width="2.5"/><path d="M34 14 H23 Q19.5 14 19.5 17.5 V19.5 Q19.5 23 23 23 H34" fill="none" stroke="#f2f2f4" stroke-width="2.5"/></svg>
<svg class="a" style="left:2741px;top:191px" width="38" height="40" viewBox="0 0 38 40"><path d="M17 3 Q19 15 29 18 Q19 21 17 33 Q15 21 5 18 Q15 15 17 3 Z" fill="none" stroke="#f2f2f4" stroke-width="2.5" stroke-linejoin="round"/><path d="M30 26 Q31 31 35 32 Q31 33 30 38 Q29 33 25 32 Q29 31 30 26 Z" fill="#f2f2f4"/></svg>
<svg class="a" style="left:2802px;top:191px" width="36" height="40" viewBox="0 0 36 40"><path d="M18 2.5 L32.5 8 V20 Q32.5 31 18 37.5 Q3.5 31 3.5 20 V8 Z" fill="none" stroke="#f2f2f4" stroke-width="2.5" stroke-linejoin="round"/><path d="M11 16.5 Q18 11 25 16.5 M13.5 20.5 Q18 17 22.5 20.5" fill="none" stroke="#f2f2f4" stroke-width="2.3" stroke-linecap="round"/><circle cx="18" cy="24.5" r="1.8" fill="#f2f2f4"/></svg>
<svg class="a" style="left:2860px;top:193px" width="40" height="34" viewBox="0 0 40 34"><path d="M3 5 H37 M3 17 H37 M3 29 H37" stroke="#f2f2f4" stroke-width="2.5" stroke-linecap="round"/></svg>
<svg class="a" style="left:154px;top:261px" width="36" height="38" viewBox="0 0 36 38"><g fill="none" stroke="#ececee" stroke-width="2.2"><rect x="3" y="3.5" width="13" height="13" rx="4"/><rect x="19.5" y="3.5" width="13" height="13" rx="4"/><rect x="3" y="21.5" width="13" height="13" rx="4"/><rect x="19.5" y="21.5" width="13" height="13" rx="4"/></g></svg>

<div class="a" style="left:132px;top:319px;width:2791px;height:1576px;background:#111827"></div>
<div class="a" style="left:132px;top:319px;width:2791px;height:129px;background:#1f2937"></div>
<div class="a" style="left:132px;top:448px;width:2791px;height:2px;background:#374151"></div>
<div class="a" style="left:132px;top:450px;width:2791px;height:146px;background:#1f2937;box-shadow:0 2px 3px rgba(0,0,0,.15)"></div>
<div class="a" style="left:704px;top:446px;width:226px;height:4px;background:#4f46e5"></div>
<svg class="a" style="left:313.2px;top:345.1px" width="76" height="76" viewBox="0 0 76 76"><circle cx="38" cy="38" r="38" fill="#5b27c7"/><defs><linearGradient id="lgA351" gradientUnits="userSpaceOnUse" x1="17" y1="38" x2="30" y2="51"><stop offset="0" stop-color="#5fcfa0"/><stop offset="1" stop-color="#79fbc8"/></linearGradient><linearGradient id="lgB351" gradientUnits="userSpaceOnUse" x1="59.5" y1="38" x2="46.5" y2="25"><stop offset="0" stop-color="#5fcfa0"/><stop offset="1" stop-color="#79fbc8"/></linearGradient></defs><g fill="none" stroke-width="12.5" stroke-linecap="round" stroke-linejoin="round"><polyline points="29.5,24.5 17.5,38 29.5,51.5" stroke="#79fbc8"/><polyline points="46.8,51.5 58.8,38 46.8,24.5" stroke="#79fbc8"/><line x1="19.5" y1="40.5" x2="29.5" y2="51.5" stroke="url(#lgA351)"/><line x1="56.8" y1="35.5" x2="46.8" y2="24.5" stroke="url(#lgB351)"/></g></svg>
<svg class="a" style="left:2690px;top:374px" width="24" height="20" viewBox="0 0 24 20"><polyline points="5,7 12,14 19,7" fill="none" stroke="#9ca3af" stroke-width="2.8" stroke-linecap="round" stroke-linejoin="round"/></svg>
<div class="a" style="left:248px;top:636px;width:345px;height:80px;border-radius:15px;background:#2f6b50"></div>
<svg class="a" style="left:286px;top:662px" width="28" height="28" viewBox="0 0 28 28"><path d="M14 3 V25 M3 14 H25" stroke="#fff" stroke-width="3.4" stroke-linecap="round"/></svg>
<div class="a" style="left:248px;top:748px;width:2560px;height:88px;border-radius:16px;background:#1f2937"></div>
<div class="a" style="left:248px;top:852px;width:2560px;height:295px;border-radius:16px;box-shadow:0 3px 5px rgba(0,0,0,0.18)"></div>
<div class="a" style="left:248px;top:852px;width:2560px;height:80px;border-radius:16px 16px 0 0;background:#374151"></div>
<div class="a" style="left:248px;top:932px;width:2560px;height:172px;background:#1f2937"></div>
<div class="a" style="left:248px;top:1104px;width:2560px;height:2px;background:#374151"></div>
<div class="a" style="left:1180px;top:964px;width:600px;height:108px;border-radius:54px;background:#f1f3f4"></div>
<svg class="a" style="left:1222px;top:1004px" width="26" height="28" viewBox="0 0 26 28"><polygon points="3,3 21,14 3,25" fill="#000"/></svg>
<div class="a" style="left:1439px;top:1014px;width:161px;height:8px;border-radius:4px;background:#5b5b5b"></div>
<svg class="a" style="left:1646px;top:1001px" width="36" height="34" viewBox="0 0 36 34"><polygon points="3,12 10,12 18,3 18,31 10,22 3,22" fill="#000"/><path d="M22 11 Q26 17 22 23" fill="none" stroke="#000" stroke-width="3"/><path d="M25 4 Q34 17 25 30" fill="none" stroke="#000" stroke-width="3"/></svg>
<div class="a" style="left:1724px;top:1004px;width:8px;height:8px;border-radius:50%;background:#000"></div>
<div class="a" style="left:1724px;top:1014px;width:8px;height:8px;border-radius:50%;background:#000"></div>
<div class="a" style="left:1724px;top:1024px;width:8px;height:8px;border-radius:50%;background:#000"></div><div class="a" style="left:248px;top:1162px;width:2560px;height:88px;border-radius:16px;background:#1f2937"></div>
<div class="a" style="left:248px;top:1266px;width:2560px;height:469px;border-radius:16px;box-shadow:0 3px 5px rgba(0,0,0,0.18)"></div>
<div class="a" style="left:248px;top:1266px;width:2560px;height:80px;border-radius:16px 16px 0 0;background:#374151"></div>
<div class="a" style="left:248px;top:1346px;width:2560px;height:172px;background:#1f2937"></div>
<div class="a" style="left:248px;top:1518px;width:2560px;height:2px;background:#374151"></div>
<div class="a" style="left:1180px;top:1378px;width:600px;height:108px;border-radius:54px;background:#f1f3f4"></div>
<svg class="a" style="left:1222px;top:1418px" width="26" height="28" viewBox="0 0 26 28"><polygon points="3,3 21,14 3,25" fill="#000"/></svg>
<div class="a" style="left:1439px;top:1428px;width:161px;height:8px;border-radius:4px;background:#5b5b5b"></div>
<svg class="a" style="left:1646px;top:1415px" width="36" height="34" viewBox="0 0 36 34"><polygon points="3,12 10,12 18,3 18,31 10,22 3,22" fill="#000"/><path d="M22 11 Q26 17 22 23" fill="none" stroke="#000" stroke-width="3"/><path d="M25 4 Q34 17 25 30" fill="none" stroke="#000" stroke-width="3"/></svg>
<div class="a" style="left:1724px;top:1418px;width:8px;height:8px;border-radius:50%;background:#000"></div>
<div class="a" style="left:1724px;top:1428px;width:8px;height:8px;border-radius:50%;background:#000"></div>
<div class="a" style="left:1724px;top:1438px;width:8px;height:8px;border-radius:50%;background:#000"></div>
<div class="a" style="left:248px;top:1520px;width:2560px;height:172px;background:#1f2937"></div>
<div class="a" style="left:248px;top:1692px;width:2560px;height:2px;background:#374151"></div>
<div class="a" style="left:1180px;top:1552px;width:600px;height:108px;border-radius:54px;background:#f1f3f4"></div>
<svg class="a" style="left:1222px;top:1592px" width="26" height="28" viewBox="0 0 26 28"><polygon points="3,3 21,14 3,25" fill="#000"/></svg>
<div class="a" style="left:1439px;top:1602px;width:161px;height:8px;border-radius:4px;background:#5b5b5b"></div>
<svg class="a" style="left:1646px;top:1589px" width="36" height="34" viewBox="0 0 36 34"><polygon points="3,12 10,12 18,3 18,31 10,22 3,22" fill="#000"/><path d="M22 11 Q26 17 22 23" fill="none" stroke="#000" stroke-width="3"/><path d="M25 4 Q34 17 25 30" fill="none" stroke="#000" stroke-width="3"/></svg>
<div class="a" style="left:1724px;top:1592px;width:8px;height:8px;border-radius:50%;background:#000"></div>
<div class="a" style="left:1724px;top:1602px;width:8px;height:8px;border-radius:50%;background:#000"></div>
<div class="a" style="left:1724px;top:1612px;width:8px;height:8px;border-radius:50%;background:#000"></div><div class="a" style="left:248px;top:1750px;width:2560px;height:88px;border-radius:16px;background:#1f2937"></div>
<div class="a" style="left:248px;top:1854px;width:2560px;height:295px;border-radius:16px;box-shadow:0 3px 5px rgba(0,0,0,0.18)"></div>
<div class="a" style="left:248px;top:1854px;width:2560px;height:80px;border-radius:16px 16px 0 0;background:#374151"></div>
<div class="a" style="left:248px;top:1934px;width:2560px;height:172px;background:#1f2937"></div>
<div class="a" style="left:248px;top:2106px;width:2560px;height:2px;background:#374151"></div>
<div class="a" style="left:1180px;top:1966px;width:600px;height:108px;border-radius:54px;background:#f1f3f4"></div>
<svg class="a" style="left:1222px;top:2006px" width="26" height="28" viewBox="0 0 26 28"><polygon points="3,3 21,14 3,25" fill="#000"/></svg>
<div class="a" style="left:1439px;top:2016px;width:161px;height:8px;border-radius:4px;background:#5b5b5b"></div>
<svg class="a" style="left:1646px;top:2003px" width="36" height="34" viewBox="0 0 36 34"><polygon points="3,12 10,12 18,3 18,31 10,22 3,22" fill="#000"/><path d="M22 11 Q26 17 22 23" fill="none" stroke="#000" stroke-width="3"/><path d="M25 4 Q34 17 25 30" fill="none" stroke="#000" stroke-width="3"/></svg>
<div class="a" style="left:1724px;top:2006px;width:8px;height:8px;border-radius:50%;background:#000"></div>
<div class="a" style="left:1724px;top:2016px;width:8px;height:8px;border-radius:50%;background:#000"></div>
<div class="a" style="left:1724px;top:2026px;width:8px;height:8px;border-radius:50%;background:#000"></div>
<div class="t" style="left:385.00px;top:116.21px;font-size:25.51px;font-weight:400;color:#fff;letter-spacing:-1.614px;-webkit-text-stroke:0.26px #fff;">TEKNIKREKAYASA</div>
<div class="t" style="left:247.40px;top:266.94px;font-size:24.64px;font-weight:400;color:#f2f2f4;letter-spacing:0.391px;-webkit-text-stroke:0.25px #f2f2f4;">For quick access, place your bookmarks here on the bookmarks bar.</div>
<div class="t" style="left:1027.70px;top:266.94px;font-size:24.64px;font-weight:400;color:#c3c3fb;letter-spacing:0.450px;text-decoration:underline;text-decoration-thickness:2px;text-underline-offset:4px;-webkit-text-stroke:0.25px #c3c3fb;">Import bookmarks now...</div>
<div class="t" style="left:719.20px;top:195.52px;font-size:29.28px;font-weight:400;color:#c9c9cd;letter-spacing:0.209px;-webkit-text-stroke:0.29px #c9c9cd;"><span style='color:#f2f2f4'>127.0.0.1</span>:8006/dashboard/jadwal</div>
<div class="t" style="left:479.70px;top:371.42px;font-size:29.28px;font-weight:400;color:#9ca3af;letter-spacing:-0.849px;-webkit-text-stroke:0.29px #9ca3af;">Dashboard</div>
<div class="t" style="left:712.30px;top:371.42px;font-size:29.28px;font-weight:400;color:#f3f4f6;letter-spacing:-0.860px;-webkit-text-stroke:0.29px #f3f4f6;">Jadwal Pelajaran</div>
<div class="t" style="left:1017.00px;top:371.42px;font-size:29.28px;font-weight:400;color:#9ca3af;letter-spacing:-0.404px;-webkit-text-stroke:0.29px #9ca3af;">Master Audio</div>
<div class="t" style="left:2465.00px;top:369.86px;font-size:28.99px;font-weight:400;color:#9ca3af;letter-spacing:-0.267px;-webkit-text-stroke:0.29px #9ca3af;">Fitzgerald Steele</div>
<div class="t" style="left:312.60px;top:502.67px;font-size:40.43px;font-weight:400;color:#e5e7eb;letter-spacing:-0.244px;-webkit-text-stroke:0.89px #e5e7eb;">Jadwal Pelajaran</div>
<div class="t" style="left:319.90px;top:661.83px;font-size:28.55px;font-weight:400;color:#fff;letter-spacing:-0.477px;-webkit-text-stroke:0.29px #fff;">TAMBAH JADWAL</div>
<div class="t" style="left:247.60px;top:772.92px;font-size:36.96px;font-weight:400;color:#e5e7eb;letter-spacing:-1.089px;-webkit-text-stroke:0.81px #e5e7eb;">Kamis</div>
<div class="t" style="left:295.50px;top:879.64px;font-size:24.64px;font-weight:400;color:#9ca3af;letter-spacing:-0.527px;-webkit-text-stroke:0.30px #9ca3af;">PELAJARAN</div>
<div class="t" style="left:715.00px;top:879.64px;font-size:24.64px;font-weight:400;color:#9ca3af;letter-spacing:-0.626px;-webkit-text-stroke:0.30px #9ca3af;">WAKTU MULAI</div>
<div class="t" style="left:1180.00px;top:879.64px;font-size:24.64px;font-weight:400;color:#9ca3af;letter-spacing:-0.458px;-webkit-text-stroke:0.30px #9ca3af;">AUDIO</div>
<div class="t" style="left:2423.00px;top:879.64px;font-size:24.64px;font-weight:400;color:#9ca3af;letter-spacing:-0.758px;-webkit-text-stroke:0.30px #9ca3af;">AKSI</div>
<div class="t" style="left:249.60px;top:1186.92px;font-size:36.96px;font-weight:400;color:#e5e7eb;letter-spacing:-2.200px;-webkit-text-stroke:0.81px #e5e7eb;">Selasa</div>
<div class="t" style="left:295.50px;top:1293.64px;font-size:24.64px;font-weight:400;color:#9ca3af;letter-spacing:-0.527px;-webkit-text-stroke:0.30px #9ca3af;">PELAJARAN</div>
<div class="t" style="left:715.00px;top:1293.64px;font-size:24.64px;font-weight:400;color:#9ca3af;letter-spacing:-0.626px;-webkit-text-stroke:0.30px #9ca3af;">WAKTU MULAI</div>
<div class="t" style="left:1180.00px;top:1293.64px;font-size:24.64px;font-weight:400;color:#9ca3af;letter-spacing:-0.458px;-webkit-text-stroke:0.30px #9ca3af;">AUDIO</div>
<div class="t" style="left:2423.00px;top:1293.64px;font-size:24.64px;font-weight:400;color:#9ca3af;letter-spacing:-0.758px;-webkit-text-stroke:0.30px #9ca3af;">AKSI</div>
<div class="t" style="left:249.60px;top:1775.92px;font-size:36.96px;font-weight:400;color:#e5e7eb;letter-spacing:-0.932px;-webkit-text-stroke:0.81px #e5e7eb;">Senin</div>
<div class="t" style="left:295.50px;top:1882.64px;font-size:24.64px;font-weight:400;color:#9ca3af;letter-spacing:-0.527px;-webkit-text-stroke:0.30px #9ca3af;">PELAJARAN</div>
<div class="t" style="left:715.00px;top:1882.64px;font-size:24.64px;font-weight:400;color:#9ca3af;letter-spacing:-0.626px;-webkit-text-stroke:0.30px #9ca3af;">WAKTU MULAI</div>
<div class="t" style="left:1180.00px;top:1882.64px;font-size:24.64px;font-weight:400;color:#9ca3af;letter-spacing:-0.458px;-webkit-text-stroke:0.30px #9ca3af;">AUDIO</div>
<div class="t" style="left:2423.00px;top:1882.64px;font-size:24.64px;font-weight:400;color:#9ca3af;letter-spacing:-0.758px;-webkit-text-stroke:0.30px #9ca3af;">AKSI</div>
<div class="t" style="left:295.00px;top:1003.76px;font-size:28.99px;font-weight:400;color:#9ca3af;letter-spacing:0.000px;-webkit-text-stroke:0.29px #9ca3af;">1</div>
<div class="t" style="left:713.50px;top:1003.76px;font-size:28.99px;font-weight:400;color:#9ca3af;letter-spacing:0.121px;-webkit-text-stroke:0.29px #9ca3af;">16:04:00</div>
<div class="t" style="left:2422.50px;top:969.46px;font-size:28.99px;font-weight:400;color:#3b6ff4;letter-spacing:-0.123px;-webkit-text-stroke:0.29px #3b6ff4;">Edit</div>
<div class="t" style="left:2488.00px;top:969.46px;font-size:28.99px;font-weight:400;color:#e0412f;letter-spacing:-0.688px;-webkit-text-stroke:0.29px #e0412f;">Hapus</div>
<div class="t" style="left:1273.00px;top:1004.20px;font-size:28.12px;font-weight:400;color:#1f1f1f;letter-spacing:0.029px;-webkit-text-stroke:0.28px #1f1f1f;">0:00 / 0:16</div>
<div class="t" style="left:295.00px;top:1417.76px;font-size:28.99px;font-weight:400;color:#9ca3af;letter-spacing:0.000px;-webkit-text-stroke:0.29px #9ca3af;">1</div>
<div class="t" style="left:714.50px;top:1417.76px;font-size:28.99px;font-weight:400;color:#9ca3af;letter-spacing:0.764px;-webkit-text-stroke:0.29px #9ca3af;">07:00:00</div>
<div class="t" style="left:2422.50px;top:1383.46px;font-size:28.99px;font-weight:400;color:#3b6ff4;letter-spacing:-0.123px;-webkit-text-stroke:0.29px #3b6ff4;">Edit</div>
<div class="t" style="left:2488.00px;top:1383.46px;font-size:28.99px;font-weight:400;color:#e0412f;letter-spacing:-0.688px;-webkit-text-stroke:0.29px #e0412f;">Hapus</div>
<div class="t" style="left:1273.00px;top:1418.20px;font-size:28.12px;font-weight:400;color:#1f1f1f;letter-spacing:0.029px;-webkit-text-stroke:0.28px #1f1f1f;">0:00 / 0:16</div>
<div class="t" style="left:296.00px;top:1591.76px;font-size:28.99px;font-weight:400;color:#9ca3af;letter-spacing:0.000px;-webkit-text-stroke:0.29px #9ca3af;">2</div>
<div class="t" style="left:714.50px;top:1591.76px;font-size:28.99px;font-weight:400;color:#9ca3af;letter-spacing:0.493px;-webkit-text-stroke:0.29px #9ca3af;">07:30:00</div>
<div class="t" style="left:2422.50px;top:1557.46px;font-size:28.99px;font-weight:400;color:#3b6ff4;letter-spacing:-0.123px;-webkit-text-stroke:0.29px #3b6ff4;">Edit</div>
<div class="t" style="left:2488.00px;top:1557.46px;font-size:28.99px;font-weight:400;color:#e0412f;letter-spacing:-0.688px;-webkit-text-stroke:0.29px #e0412f;">Hapus</div>
<div class="t" style="left:1273.00px;top:1592.20px;font-size:28.12px;font-weight:400;color:#1f1f1f;letter-spacing:0.029px;-webkit-text-stroke:0.28px #1f1f1f;">0:00 / 0:15</div>
</div>
<div class="a" style="left:132px;top:90px;width:2791px;height:1805px;border-radius:20px;border:2px solid #5a5a5e"></div>
</body></html>
